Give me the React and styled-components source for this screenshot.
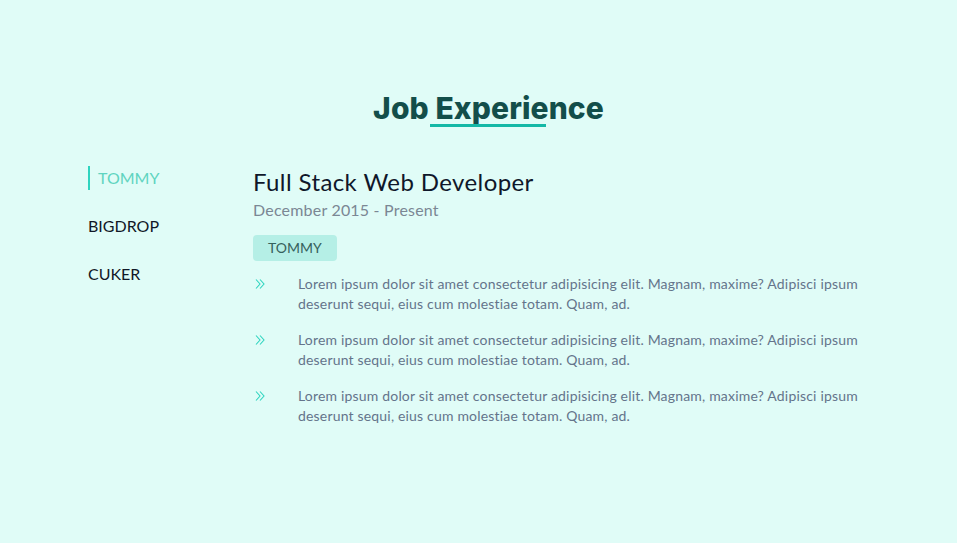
import styled, { createGlobalStyle } from "styled-components";

const GlobalStyle = createGlobalStyle`
    body {
        margin: 0;
        background: #e0fcf7;
        font-family: "Lato", "Noto Sans", sans-serif;
    }
`

const Section = styled.section`
    min-height: 543px;
    padding-top: 88px;
    box-sizing: border-box;
`

const Heading = styled.h2`
    margin: 0 auto;
    width: fit-content;
    padding-left: 20px;
    position: relative;
    font-family: "Inter", sans-serif;
    font-weight: 800;
    font-size: 30px;
    letter-spacing: 0.1px;
    color: #134e4a;
    line-height: 40px;

    span {
        position: relative;
    }

    span::after {
        content: "";
        position: absolute;
        left: -5px;
        width: 116px;
        bottom: -1px;
        height: 3px;
        background: #14b8a6;
    }
`

const Body = styled.div`
    display: flex;
    padding: 38px 0 0 88px;
`

const Tabs = styled.ul`
    list-style: none;
    margin: 0;
    padding: 0;
    width: 165px;
    display: flex;
    flex-direction: column;
    gap: 24px;
`

const Tab = styled.li`
    height: 24px;
    line-height: 24px;
    font-size: 16px;
    padding-left: ${p => p.active ? "8px" : "0"};
    border-left: ${p => p.active ? "2px solid #2dd4bf" : "none"};
    color: ${p => p.active ? "#5fd4c0" : "#111827"};
`

const Content = styled.div`
    width: 615px;
`

const Title = styled.h3`
    margin: 0;
    font-weight: 400;
    font-size: 24px;
    letter-spacing: 0.4px;
    line-height: 32px;
    color: #0f172a;
`

const Dates = styled.p`
    margin: 0;
    font-size: 16px;
    letter-spacing: 0.2px;
    line-height: 24px;
    color: #7b8794;
`

const Tag = styled.div`
    display: inline-block;
    margin-top: 13px;
    padding: 0 15px;
    height: 26px;
    line-height: 26px;
    border-radius: 4px;
    background: #b5efe6;
    font-size: 14px;
    color: #35615c;
`

const Points = styled.ul`
    list-style: none;
    margin: 13px 0 0;
    padding: 0;
    display: flex;
    flex-direction: column;
    gap: 16px;
`

const Point = styled.li`
    display: flex;
    align-items: flex-start;
    font-size: 14px;
    letter-spacing: 0.18px;
    line-height: 20px;
    color: #64748b;

    svg {
        flex-shrink: 0;
        margin: 5px 33px 0 2px;
    }
`

const Chevrons = () => (
    <svg width="10" height="10" viewBox="0 0 10 10" fill="none" stroke="#2dd4bf" strokeWidth="1.1">
        <path d="M1 0.5l4 4.5-4 4.5" />
        <path d="M5 0.5l4 4.5-4 4.5" />
    </svg>
)

const text = "Lorem ipsum dolor sit amet consectetur adipisicing elit. Magnam, maxime? Adipisci ipsum deserunt sequi, eius cum molestiae totam. Quam, ad."

const App = () => {
    const tabs = ["TOMMY", "BIGDROP", "CUKER"]

    return (
        <Section>
            <GlobalStyle />
            <Heading>Job <span>Experience</span></Heading>
            <Body>
                <Tabs>
                    {tabs.map((t, i) => <Tab key={t} active={i === 0}>{t}</Tab>)}
                </Tabs>
                <Content>
                    <Title>Full Stack Web Developer</Title>
                    <Dates>December 2015 - Present</Dates>
                    <Tag>TOMMY</Tag>
                    <Points>
                        {[0, 1, 2].map(i => (
                            <Point key={i}>
                                <Chevrons />
                                <span>{text}</span>
                            </Point>
                        ))}
                    </Points>
                </Content>
            </Body>
        </Section>
    )
}

export default App;
